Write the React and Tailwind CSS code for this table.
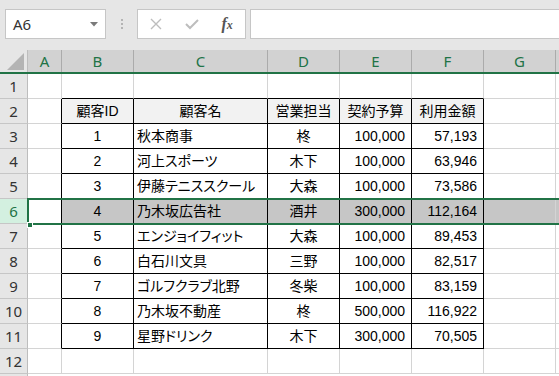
import React from "react";

const cols = [
  { k: "A", w: "w-[34px]" },
  { k: "B", w: "w-[72px]" },
  { k: "C", w: "w-[134px]" },
  { k: "D", w: "w-[72px]" },
  { k: "E", w: "w-[72px]" },
  { k: "F", w: "w-[72px]" },
  { k: "G", w: "w-[72px]" },
];

const data = [
  ["1", "秋本商事", "柊", "100,000", "57,193"],
  ["2", "河上スポーツ", "木下", "100,000", "63,946"],
  ["3", "伊藤テニススクール", "大森", "100,000", "73,586"],
  ["4", "乃木坂広告社", "酒井", "300,000", "112,164"],
  ["5", "エンジョイフィット", "大森", "100,000", "89,453"],
  ["6", "白石川文具", "三野", "100,000", "82,517"],
  ["7", "ゴルフクラブ北野", "冬柴", "100,000", "83,159"],
  ["8", "乃木坂不動産", "柊", "500,000", "116,922"],
  ["9", "星野ドリンク", "木下", "300,000", "70,505"],
];

const header = ["顧客ID", "顧客名", "営業担当", "契約予算", "利用金額"];

function cellContent(r, ci) {
  if (r === 2 && ci >= 1 && ci <= 5) return { t: header[ci - 1], a: "justify-center" };
  if (r >= 3 && r <= 11 && ci >= 1 && ci <= 5) {
    const row = data[r - 3];
    const v = row[ci - 1];
    const a = ci === 1 || ci === 3 ? "justify-center" : ci === 2 ? "justify-start pl-[3px]" : "justify-end pr-[6px]";
    return { t: v, a };
  }
  return { t: "", a: "" };
}

function Cell({ r, ci, w }) {
  const inTableRows = r >= 2 && r <= 11;
  const rightBlack = inTableRows && ci >= 0 && ci <= 5;
  const bottomBlack = r >= 1 && r <= 11 && ci >= 1 && ci <= 5;
  const sel = r === 6 && ci >= 1;
  const hdr = r === 2 && ci >= 1 && ci <= 5;
  const { t, a } = cellContent(r, ci);
  const bg = sel ? "bg-[#c6c6c6]" : hdr ? "bg-[#f2f2f2]" : "bg-white";
  return (
    <div
      className={`${w} h-full shrink-0 flex items-center border-r border-b ${rightBlack ? "border-r-black" : "border-r-[#d4d4d4]"} ${bottomBlack ? "border-b-black" : "border-b-[#d4d4d4]"} ${bg} ${a} text-[14px] text-black whitespace-nowrap overflow-visible [font-feature-settings:'palt'] font-['Liberation_Sans','Noto_Sans_CJK_JP',sans-serif]`}
    >
      {t}
    </div>
  );
}

export default function App() {
  const rows = Array.from({ length: 12 }, (_, i) => i + 1);
  return (
    <div className="w-[559px] h-[376px] overflow-hidden bg-white font-['Noto_Sans_CJK_JP','Noto_Sans',sans-serif] relative">
      {/* Top formula bar */}
      <div className="h-[50px] bg-[#e6e6e6] flex items-start pt-[9px] pl-[5px] font-['Noto_Sans','Liberation_Sans',sans-serif]">
        <div className="w-[101px] h-[30px] bg-white border border-[#c6c6c6] flex items-center justify-between pl-[7px] pr-[7px]">
          <span className="text-[15px] text-[#333] leading-none">A6</span>
          <svg width="8" height="5" viewBox="0 0 8 5">
            <path d="M0 0 L8 0 L4 4.5 Z" fill="#7a7a7a" />
          </svg>
        </div>
        <div className="w-[31px] h-[30px] flex flex-col items-center justify-center gap-[2px] pl-[1px]">
          <div className="w-[2px] h-[2px] bg-[#b4b4b4]" />
          <div className="w-[2px] h-[2px] bg-[#b4b4b4]" />
          <div className="w-[2px] h-[2px] bg-[#b4b4b4]" />
        </div>
        <div className="w-[109px] h-[30px] bg-white border border-[#c6c6c6] flex items-center">
          <div className="w-[36px] flex justify-center">
            <svg width="12" height="12" viewBox="0 0 12 12">
              <path d="M1 1 L11 11 M11 1 L1 11" stroke="#bdbdbd" strokeWidth="1.4" />
            </svg>
          </div>
          <div className="w-[36px] flex justify-center">
            <svg width="14" height="12" viewBox="0 0 14 12">
              <path d="M1 6 L5 10 L13 2" stroke="#bdbdbd" strokeWidth="2" fill="none" />
            </svg>
          </div>
          <div className="w-[36px] flex justify-center">
            <span className="font-['Liberation_Serif',serif] italic font-bold text-[16px] text-[#555] leading-none">
              f<span className="text-[12px]">x</span>
            </span>
          </div>
        </div>
        <div className="ml-[4px] flex-1 h-[30px] bg-white border border-[#c6c6c6] border-r-0" />
      </div>

      {/* Grid */}
      <div className="relative">
        <div className="flex h-[24px] border-b-2 border-b-[#217346]">
          <div className="w-[28px] shrink-0 h-full bg-[#e6e6e6] border-r border-[#bdbdbd] relative">
            <svg className="absolute right-[3px] bottom-[2px]" width="17" height="17" viewBox="0 0 17 17">
              <path d="M17 0 L17 17 L0 17 Z" fill="#b4b4b4" />
            </svg>
          </div>
          {cols.map((c) => (
            <div
              key={c.k}
              className={`${c.w} shrink-0 h-full bg-[#d2d2d2] border-r border-[#ababab] flex items-center justify-center text-[15px] text-[#217346] font-['Noto_Sans','Liberation_Sans',sans-serif]`}
            >
              {c.k}
            </div>
          ))}
          <div className="flex-1 h-full bg-[#d2d2d2]" />
        </div>

        {rows.map((r) => (
          <div key={r} className="flex h-[25px]">
            <div
              className={`w-[28px] shrink-0 h-full border-r border-b flex items-center justify-center text-[15px] font-['Noto_Sans','Liberation_Sans',sans-serif] ${r === 6 ? "bg-[#d3f0e0] text-[#217346] border-r-[#217346] border-b-[#c6c6c6]" : "bg-[#e6e6e6] text-[#333] border-r-[#bdbdbd] border-b-[#c6c6c6]"}`}
            >
              {r}
            </div>
            {cols.map((c, ci) => (
              <Cell key={c.k} r={r} ci={ci} w={c.w} />
            ))}
            <div className={`flex-1 h-full border-b border-b-[#d4d4d4] ${r === 6 ? "bg-[#c6c6c6]" : "bg-white"}`} />
          </div>
        ))}
        <div className="flex h-[10px]">
          <div className="w-[28px] shrink-0 h-full bg-[#e6e6e6] border-r border-[#bdbdbd]" />
          <div className="flex-1 h-full bg-white" />
        </div>

        <div className="absolute left-[27px] top-[148px] w-[600px] h-[27px] border-2 border-[#217346] pointer-events-none" />
        <div className="absolute left-[27px] top-[172px] w-[6px] h-[6px] bg-[#217346] border border-white" />
      </div>
    </div>
  );
}
